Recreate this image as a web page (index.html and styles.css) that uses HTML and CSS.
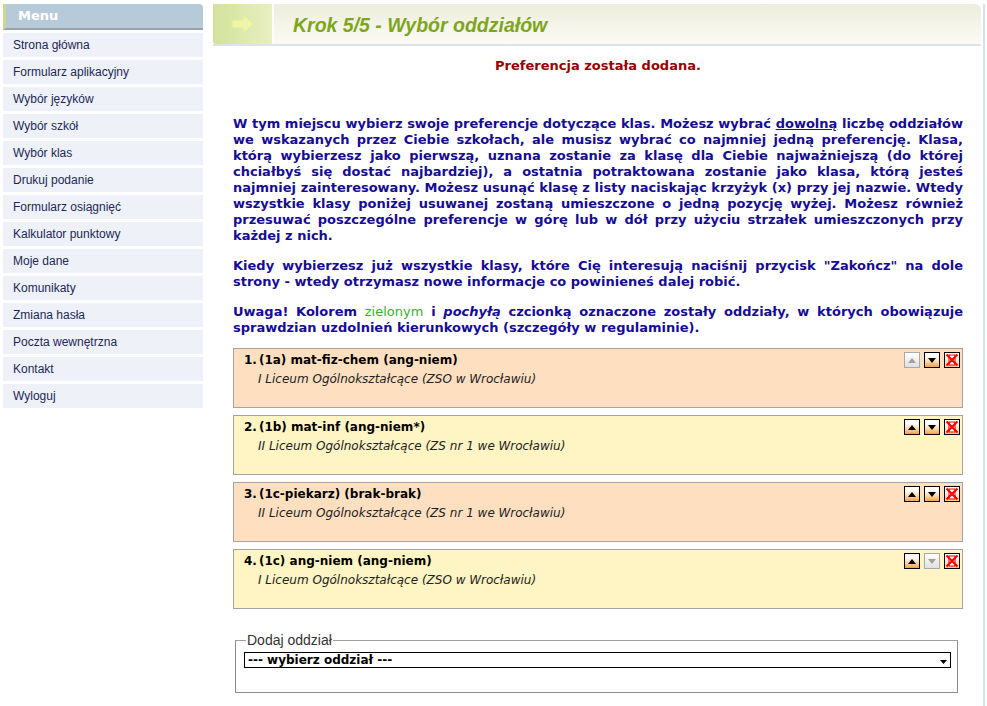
FILE: index.html
```html
<!DOCTYPE html>
<html lang="pl">
<head>
<meta charset="utf-8">
<title>Krok 5/5 - Wybór oddziałów</title>
<link rel="stylesheet" href="styles.css">
</head>
<body>
<div class="page">
  <aside class="sidebar">
    <div class="menu-head">Menu</div>
    <ul class="menu">
      <li>Strona główna</li>
      <li>Formularz aplikacyjny</li>
      <li>Wybór języków</li>
      <li>Wybór szkół</li>
      <li>Wybór klas</li>
      <li>Drukuj podanie</li>
      <li>Formularz osiągnięć</li>
      <li>Kalkulator punktowy</li>
      <li>Moje dane</li>
      <li>Komunikaty</li>
      <li>Zmiana hasła</li>
      <li>Poczta wewnętrzna</li>
      <li>Kontakt</li>
      <li>Wyloguj</li>
    </ul>
  </aside>
  <main class="main">
    <div class="titlebar">
      <div class="arrow-box">
        <svg width="24" height="20" viewBox="0 0 24 20"><path d="M1 6 H12 V1 L23 10 L12 19 V14 H1 Z" fill="#eef5a8" stroke="#e2ec96" stroke-width="1"/></svg>
      </div>
      <h1 class="title">Krok 5/5 - Wybór oddziałów</h1>
    </div>
    <p class="notice">Preferencja została dodana.</p>
    <div class="info">
      <p>W tym miejscu wybierz swoje preferencje dotyczące klas. Możesz wybrać <u>dowolną</u> liczbę oddziałów we wskazanych przez Ciebie szkołach, ale musisz wybrać co najmniej jedną preferencję. Klasa, którą wybierzesz jako pierwszą, uznana zostanie za klasę dla Ciebie najważniejszą (do której chciałbyś się dostać najbardziej), a ostatnia potraktowana zostanie jako klasa, którą jesteś najmniej zainteresowany. Możesz usunąć klasę z listy naciskając krzyżyk (x) przy jej nazwie. Wtedy wszystkie klasy poniżej usuwanej zostaną umieszczone o jedną pozycję wyżej. Możesz również przesuwać poszczególne preferencje w górę lub w dół przy użyciu strzałek umieszczonych przy każdej z nich.</p>
      <p>Kiedy wybierzesz już wszystkie klasy, które Cię interesują naciśnij przycisk "Zakończ" na dole strony - wtedy otrzymasz nowe informacje co powinieneś dalej robić.</p>
      <p>Uwaga! Kolorem <span class="green">zielonym</span> i <i>pochyłą</i> czcionką oznaczone zostały oddziały, w których obowiązuje sprawdzian uzdolnień kierunkowych (szczegóły w regulaminie).</p>
    </div>

    <div class="prefs">
      <div class="pref peach">
        <div class="pref-text">
          <div class="pref-name"><span class="num">1.</span>(1a) mat-fiz-chem (ang-niem)</div>
          <div class="pref-school">I Liceum Ogólnokształcące (ZSO w Wrocławiu)</div>
        </div>
        <div class="btns">
          <span class="btn off"><svg width="8" height="5" viewBox="0 0 8 5"><path d="M0 5 L4 0 L8 5Z" fill="#a0a0a0"/></svg></span>
          <span class="btn"><svg width="8" height="5" viewBox="0 0 8 5"><path d="M0 0 L4 5 L8 0Z" fill="#000"/></svg></span>
          <span class="btn del"><svg width="14" height="14" viewBox="0 0 14 14"><rect x="4" y="2" width="6" height="10" fill="#fff" stroke="#d00" stroke-width="1"/><path d="M1.5 1.5 L12.5 12.5 M12.5 1.5 L1.5 12.5" stroke="#f00" stroke-width="2.2"/></svg></span>
        </div>
      </div>
      <div class="pref yellow">
        <div class="pref-text">
          <div class="pref-name"><span class="num">2.</span>(1b) mat-inf (ang-niem*)</div>
          <div class="pref-school">II Liceum Ogólnokształcące (ZS nr 1 we Wrocławiu)</div>
        </div>
        <div class="btns">
          <span class="btn"><svg width="8" height="5" viewBox="0 0 8 5"><path d="M0 5 L4 0 L8 5Z" fill="#000"/></svg></span>
          <span class="btn"><svg width="8" height="5" viewBox="0 0 8 5"><path d="M0 0 L4 5 L8 0Z" fill="#000"/></svg></span>
          <span class="btn del"><svg width="14" height="14" viewBox="0 0 14 14"><rect x="4" y="2" width="6" height="10" fill="#fff" stroke="#d00" stroke-width="1"/><path d="M1.5 1.5 L12.5 12.5 M12.5 1.5 L1.5 12.5" stroke="#f00" stroke-width="2.2"/></svg></span>
        </div>
      </div>
      <div class="pref peach">
        <div class="pref-text">
          <div class="pref-name"><span class="num">3.</span>(1c-piekarz) (brak-brak)</div>
          <div class="pref-school">II Liceum Ogólnokształcące (ZS nr 1 we Wrocławiu)</div>
        </div>
        <div class="btns">
          <span class="btn"><svg width="8" height="5" viewBox="0 0 8 5"><path d="M0 5 L4 0 L8 5Z" fill="#000"/></svg></span>
          <span class="btn"><svg width="8" height="5" viewBox="0 0 8 5"><path d="M0 0 L4 5 L8 0Z" fill="#000"/></svg></span>
          <span class="btn del"><svg width="14" height="14" viewBox="0 0 14 14"><rect x="4" y="2" width="6" height="10" fill="#fff" stroke="#d00" stroke-width="1"/><path d="M1.5 1.5 L12.5 12.5 M12.5 1.5 L1.5 12.5" stroke="#f00" stroke-width="2.2"/></svg></span>
        </div>
      </div>
      <div class="pref yellow">
        <div class="pref-text">
          <div class="pref-name"><span class="num">4.</span>(1c) ang-niem (ang-niem)</div>
          <div class="pref-school">I Liceum Ogólnokształcące (ZSO w Wrocławiu)</div>
        </div>
        <div class="btns">
          <span class="btn"><svg width="8" height="5" viewBox="0 0 8 5"><path d="M0 5 L4 0 L8 5Z" fill="#000"/></svg></span>
          <span class="btn off"><svg width="8" height="5" viewBox="0 0 8 5"><path d="M0 0 L4 5 L8 0Z" fill="#a0a0a0"/></svg></span>
          <span class="btn del"><svg width="14" height="14" viewBox="0 0 14 14"><rect x="4" y="2" width="6" height="10" fill="#fff" stroke="#d00" stroke-width="1"/><path d="M1.5 1.5 L12.5 12.5 M12.5 1.5 L1.5 12.5" stroke="#f00" stroke-width="2.2"/></svg></span>
        </div>
      </div>
    </div>

    <fieldset class="add">
      <legend>Dodaj oddział</legend>
      <div class="select"><span>--- wybierz oddział ---</span><svg width="7" height="4" viewBox="0 0 7 4"><path d="M0 0 L3.5 4 L7 0Z" fill="#000"/></svg></div>
    </fieldset>
  </main>
</div>
</body>
</html>
```
FILE: styles.css
```css
* { box-sizing: border-box; }
html, body { margin: 0; padding: 0; background: #fff; }
body { font-family: "DejaVu Sans", Verdana, sans-serif; }

.page {
  display: flex;
  align-items: flex-start;
  padding: 4px 0 0 3px;
  height: 706px;
  overflow: hidden;
}

.sidebar { width: 200px; flex: none; }
.menu-head {
  height: 26px;
  background: #b7cad9;
  border-left: 3px solid #ccd88c;
  border-bottom: 2px solid #9aa3aa;
  border-top-right-radius: 4px;
  color: #fff;
  font: bold 13px "DejaVu Sans", Verdana, sans-serif;
  padding: 4px 0 0 12px;
}
.menu { list-style: none; margin: 3px 0 0; padding: 0; display: flex; flex-direction: column; gap: 3px; }
.menu li {
  height: 24px;
  background: #eef1f7;
  color: #1c2857;
  font: 12px/24px "Liberation Sans", Arial, sans-serif;
  padding-left: 10px;
}

.main {
  margin-left: 10px;
  width: 772px;
  height: 720px;
  border-right: 2px solid #d4e0ec;
}

.titlebar {
  display: flex;
  height: 42px;
  border-top-right-radius: 6px;
  border-bottom: 2px solid #dde3e8;
  background: linear-gradient(#ededdc, #fbfbf5);
  margin-right: 2px;
}
.arrow-box {
  width: 61px;
  border-right: 2px solid #fff;
  background: linear-gradient(90deg, #d2e29a, #e8efc2);
  display: flex; align-items: center; justify-content: center;
  border-bottom-left-radius: 3px;
}
.title {
  margin: 0 0 0 19px;
  font: italic bold 19.5px/42px "Liberation Sans", Arial, sans-serif;
  color: #7ea61c;
}

.notice {
  margin: 12px 0 0;
  text-align: center;
  color: #990000;
  font: bold 13px/16px "DejaVu Sans", Verdana, sans-serif;
}

.info { padding: 0 20px; margin-top: 42px; }
.info p {
  margin: 0 0 14px;
  color: #160c95;
  font: bold 13px/16px "DejaVu Sans", Verdana, sans-serif;
  text-align: justify;
}
.info p:last-child { margin-bottom: 0; }
.info u { text-decoration: underline; }
.info .green { color: #3cae2c; font-weight: normal; }
.info i { font-style: italic; }

.prefs { padding: 0 20px; display: flex; flex-direction: column; gap: 7px; margin-top: 12px; }
.pref {
  height: 60px;
  border: 1px solid #a3a3a3;
  display: flex;
  justify-content: space-between;
  padding: 3px 2px 0 10px;
}
.peach { background: #fee0c1; }
.yellow { background: #fff4c3; }
.pref-name { font: bold 12px/16px "DejaVu Sans", Verdana, sans-serif; color: #000; }
.pref-name .num { margin-right: 2px; }
.pref-school { font: italic 12px/16px "DejaVu Sans", Verdana, sans-serif; color: #222; margin: 3px 0 0 14px; }
.btns { display: flex; gap: 4px; }
.btn {
  width: 16px; height: 16px;
  border: 1px solid #000;
  background: linear-gradient(#ffffff 20%, #fde2b9 55%, #f6a14a);
  display: flex; align-items: center; justify-content: center;
}
.btn.off { border-color: #a8a8a8; background: linear-gradient(#ffffff, #e0e0e0); }
.btn.del { background: linear-gradient(#fff 20%, #fbc98a); }

.add {
  margin: 23px 25px 0 22px;
  border: 1px solid #8c8c8c;
  border-top-color: #a0a0a0;
  padding: 4px 6px 24px 8px;
}
.add legend {
  padding: 0 1px;
  margin-left: 2px;
  font: 14px "Liberation Sans", Arial, sans-serif;
  color: #333;
}
.select {
  height: 16px;
  border: 1px solid #000;
  display: flex; justify-content: space-between; align-items: center;
  padding: 0 3px 0 3px;
  font: bold 12px "DejaVu Sans", Verdana, sans-serif;
  color: #000;
}
.select svg { margin-top: 3px; }
```
